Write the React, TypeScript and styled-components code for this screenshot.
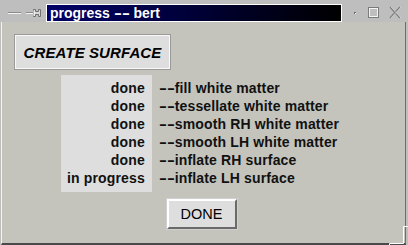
import React from "react";
import styled, { createGlobalStyle } from "styled-components";

const GlobalStyle = createGlobalStyle`
  html, body {
    margin: 0;
    padding: 0;
    background: #c4c4bc;
  }
  body {
    font-family: "Liberation Sans", Arial, Helvetica, sans-serif;
  }
`;

const Window = styled.div`
  position: relative;
  width: 408px;
  height: 245px;
  box-sizing: border-box;
  display: flex;
  flex-direction: column;
  background: #bebebe;
  border-left: 1px solid #bebebe;
  border-right: 2px solid #bebebe;
`;

const TitleBar = styled.div`
  height: 22px;
  flex: none;
  display: flex;
  align-items: flex-start;
  padding-top: 4px;
  box-sizing: border-box;
`;

const IconGroup = styled.div<{ $width: number }>`
  width: ${(p) => p.$width}px;
  height: 18px;
  flex: none;
  display: flex;
  align-items: center;
`;

const TitleBox = styled.div`
  flex: 1;
  height: 18px;
  box-sizing: border-box;
  border: 1px solid #ffffff;
  background: linear-gradient(90deg, #000068 0%, #00003c 45%, #000000 100%);
  color: #ffffff;
  font-weight: bold;
  font-size: 14px;
  line-height: 16px;
  padding-left: 3px;
  white-space: nowrap;
  overflow: hidden;
`;

/* the old bitmap font draws "--" as two long dashes */
const Dashes = styled.span`
  display: inline-block;
  letter-spacing: 0;
  transform: scaleX(1.7);
  transform-origin: left center;
  margin-right: 6.5px;
`;

const Content = styled.div`
  flex: 1;
  display: flex;
  flex-direction: column;
  background: #c4c4bc;
  border-left: 1px solid #f4f4f4;
  border-right: 1px solid #6e6e6e;
  border-bottom: 2px solid #4a4a4a;
  padding-top: 12px;
`;

const CreateButton = styled.button`
  align-self: flex-start;
  margin-left: 12px;
  width: 157px;
  height: 36px;
  box-sizing: border-box;
  background: #dedede;
  border: 1px solid #9a9a9a;
  box-shadow: inset 0 0 0 1px #f8f8f8;
  font-family: "Liberation Sans", Arial, sans-serif;
  font-weight: bold;
  font-style: italic;
  font-size: 15px;
  letter-spacing: 0.1px;
  color: #000;
  padding: 0;
`;

const Table = styled.div`
  align-self: center;
  margin-top: 5px;
  margin-left: -7px;
  display: flex;
  font-weight: bold;
  font-size: 14px;
  letter-spacing: 0.15px;
  color: #111;
`;

const StatusCol = styled.div`
  background: #dedede;
  padding: 4px 7px 5px 6px;
  display: flex;
  flex-direction: column;
  align-items: flex-end;
`;

const StepCol = styled.div`
  padding: 4px 0 5px 7px;
  display: flex;
  flex-direction: column;
`;

const Cell = styled.div`
  height: 18px;
  line-height: 18px;
  white-space: nowrap;
`;

const Footer = styled.div`
  display: flex;
  justify-content: center;
  margin-top: 7px;
  padding-right: 4px;
`;

const DoneButton = styled.button`
  width: 70px;
  height: 30px;
  box-sizing: border-box;
  background: #dedede;
  border: 2px solid;
  border-color: #ffffff #6a6a6a #6a6a6a #ffffff;
  outline: 1px solid #d0d0d0;
  font-family: "Liberation Sans", Arial, sans-serif;
  font-size: 14.5px;
  color: #000;
  padding: 0;
`;

const Grip = styled.svg`
  position: absolute;
  right: -2px;
  bottom: 0;
`;

const steps: [string, string][] = [
  ["done", "fill white matter"],
  ["done", "tessellate white matter"],
  ["done", "smooth RH white matter"],
  ["done", "smooth LH white matter"],
  ["done", "inflate RH surface"],
  ["in progress", "inflate LH surface"],
];

function LeftIcons() {
  return (
    <IconGroup $width={45}>
      <svg width="45" height="18" viewBox="0 0 45 18">
        {/* window menu bar */}
        <line x1="7" y1="8.5" x2="20" y2="8.5" stroke="#8a8a8a" />
        <line x1="7" y1="9.5" x2="20" y2="9.5" stroke="#f4f4f4" />
        {/* pin */}
        <line x1="25" y1="8.5" x2="32" y2="8.5" stroke="#8a8a8a" />
        <line x1="25" y1="9.5" x2="32" y2="9.5" stroke="#f4f4f4" />
        <path d="M32.5 5.5 L34.5 5.5 L34.5 7.5 L37.5 7.5 L37.5 5.5 L39.5 5.5 L39.5 12.5 L37.5 12.5 L37.5 10.5 L34.5 10.5 L34.5 12.5 L32.5 12.5 Z" fill="#d8d8d8" stroke="#707070" />
        <line x1="33" y1="6.5" x2="33" y2="12" stroke="#ffffff" />
      </svg>
    </IconGroup>
  );
}

function RightIcons() {
  return (
    <IconGroup $width={64}>
      <svg width="64" height="18" viewBox="0 0 64 18">
        {/* iconify */}
        <rect x="12" y="8" width="2" height="2" fill="#6a6a6a" />
        <rect x="13" y="9" width="1" height="1" fill="#ffffff" />
        {/* maximize */}
        <rect x="26.5" y="3.5" width="10" height="10" fill="none" stroke="#7a7a7a" />
        <rect x="27.5" y="4.5" width="8" height="8" fill="none" stroke="#f4f4f4" />
        {/* close */}
        <path d="M48 3 L58 14 M58 3 L48 14" stroke="#7a7a7a" strokeWidth="1.3" />
        <path d="M49 3 L59 14 M59 3 L49 14" stroke="#f4f4f4" strokeWidth="0.6" opacity="0.8" />
      </svg>
    </IconGroup>
  );
}

export default function App() {
  return (
    <>
      <GlobalStyle />
      <Window>
        <TitleBar>
          <LeftIcons />
          <TitleBox>
            progress <Dashes>--</Dashes> bert
          </TitleBox>
          <RightIcons />
        </TitleBar>
        <Content>
          <CreateButton>CREATE SURFACE</CreateButton>
          <Table>
            <StatusCol>
              {steps.map(([status], i) => (
                <Cell key={i}>{status}</Cell>
              ))}
            </StatusCol>
            <StepCol>
              {steps.map(([, step], i) => (
                <Cell key={i}>
                  <Dashes>--</Dashes>
                  {step}
                </Cell>
              ))}
            </StepCol>
          </Table>
          <Footer>
            <DoneButton>DONE</DoneButton>
          </Footer>
        </Content>
        <Grip width="20" height="20" viewBox="0 0 20 20">
          <path d="M20 1.5 L15.5 1.5 L15.5 18.5 L1.5 18.5 L1.5 20" fill="none" stroke="#ffffff" />
        </Grip>
      </Window>
    </>
  );
}
